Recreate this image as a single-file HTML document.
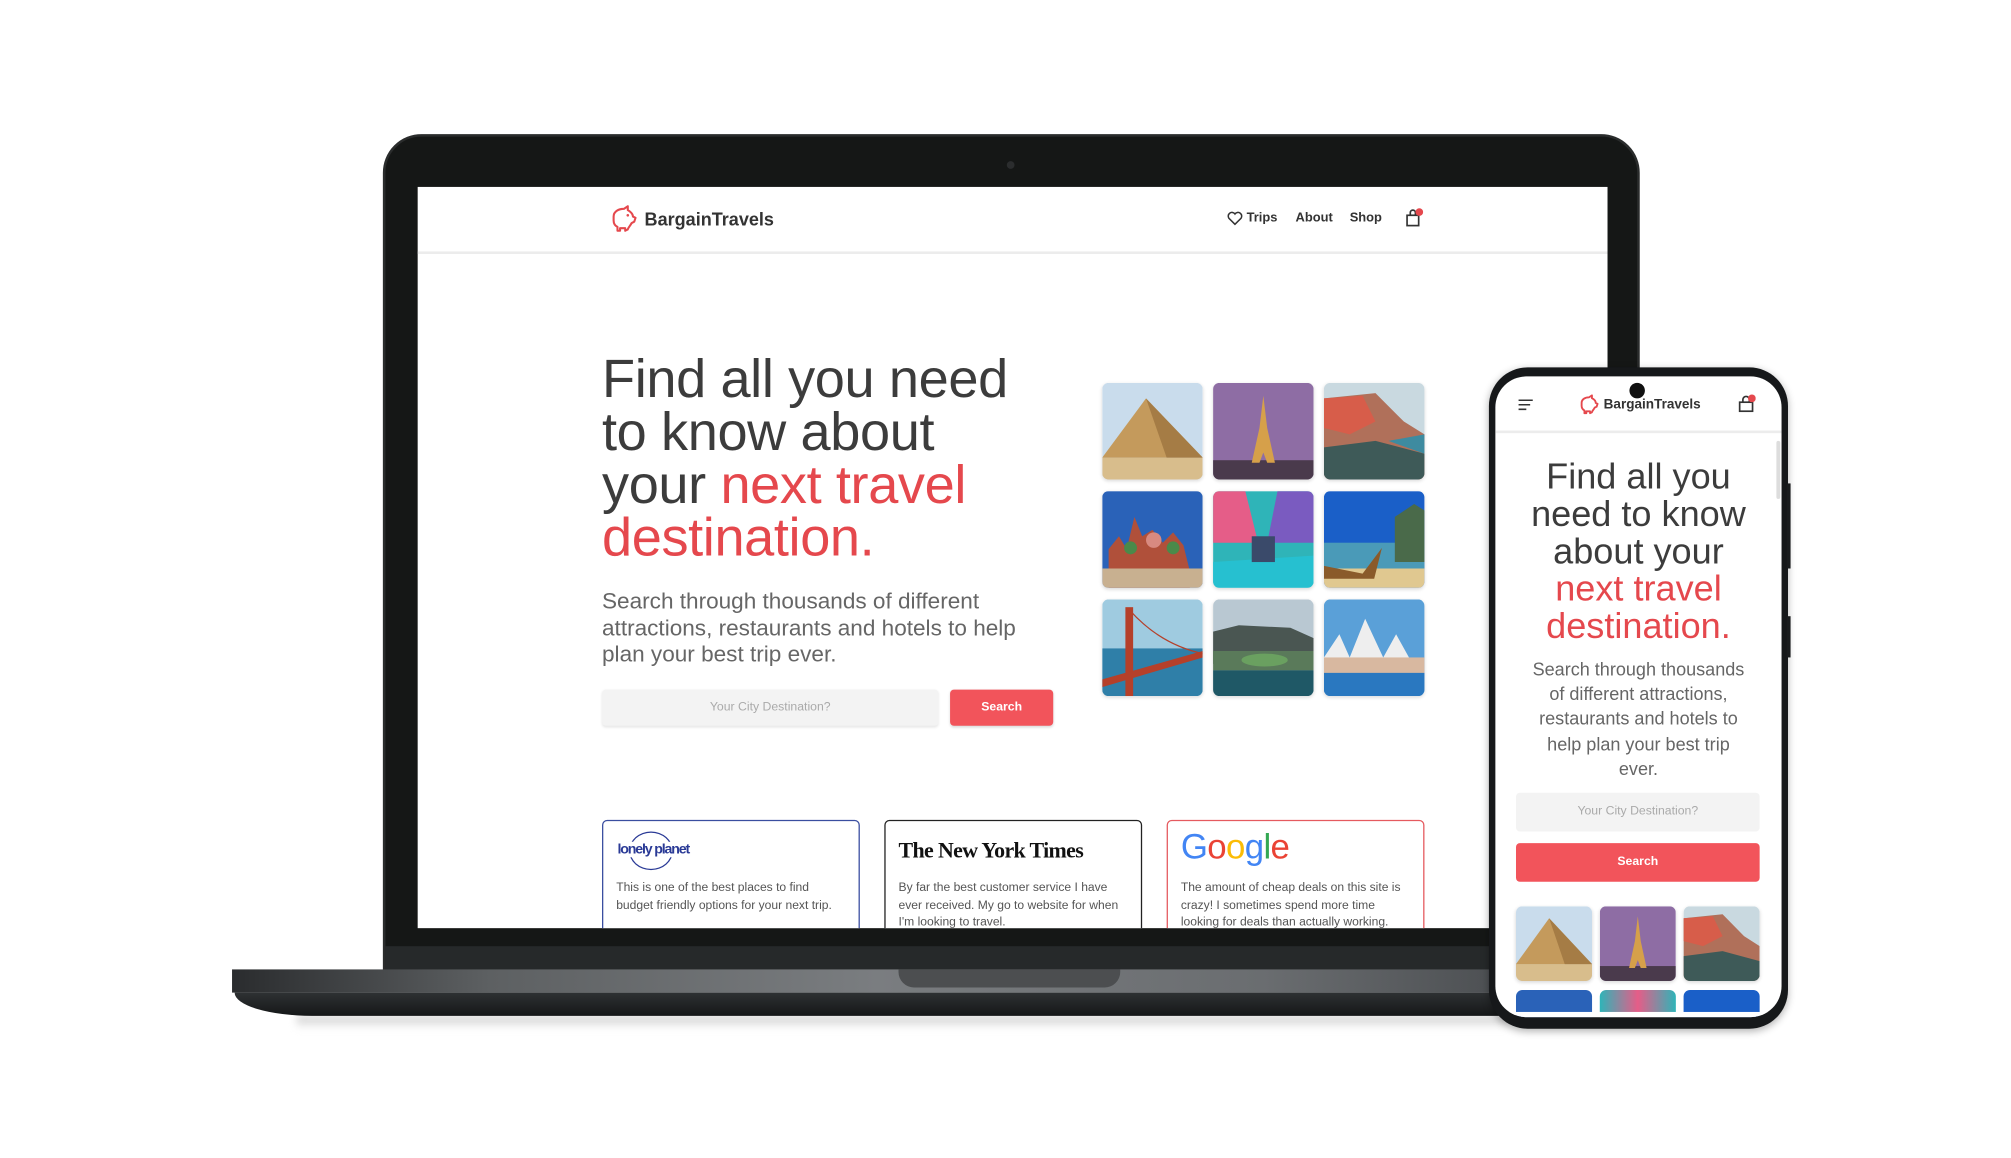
<!DOCTYPE html>
<html><head><meta charset="utf-8">
<style>
*{margin:0;padding:0;box-sizing:border-box}
html,body{width:2011px;height:1158px;background:#fff;overflow:hidden;font-family:"Liberation Sans",sans-serif}
#w{position:absolute;left:0;top:0;width:1560px;height:898px;transform:scale(1.28911);transform-origin:0 0}
.a{position:absolute}
.lid{left:297px;top:104px;width:975px;height:650px;background:#151716;border-radius:30px 30px 0 0;border:2px solid #2a2c2c}
.lidlow{left:299px;top:734px;width:971px;height:20px;background:#26292a}
.screen{left:324px;top:145px;width:923px;height:575px;background:#fff;overflow:hidden}
.baseT{left:180px;top:752px;width:1000px;height:18px;background:linear-gradient(90deg,#2a2c2e,#5d6062 20%,#7a7d80 50%,#6a6d70 80%,#4a4d50)}
.baseB{left:182px;top:770px;width:998px;height:18px;background:linear-gradient(#2e3133,#151718);border-radius:0 0 0 60px/0 0 0 18px}
.shadow{left:230px;top:788px;width:940px;height:10px;background:linear-gradient(#c8c8c8,rgba(255,255,255,0));filter:blur(3px)}
.notch{left:697px;top:752px;width:172px;height:14px;background:#4c4e50;border-radius:0 0 12px 12px}
.red{color:#e5484d}
.nav{font-size:10px;font-weight:bold;color:#333}
.ph{border-radius:5px;overflow:hidden;box-shadow:0 1px 3px rgba(0,0,0,.15)}
.ph svg{width:100%;height:100%;display:block}
.card{border:1.5px solid;border-radius:4px;background:#fff;width:200px;height:100px;padding:8px 10px}
.card p{font-size:9.4px;line-height:13.6px;color:#555;margin-top:22px}
.phone{left:1155px;top:285px;width:232px;height:513px;background:#16181a;border-radius:30px;box-shadow:0 2px 6px rgba(0,0,0,.3)}
.pscreen{left:1160px;top:292px;width:222px;height:497px;background:#fff;border-radius:24px;overflow:hidden}
</style></head><body><div id="w">

<div class="a lid"></div>
<div class="a" style="left:781px;top:125px;width:6px;height:6px;border-radius:50%;background:#2b2d2e"></div>
<div class="a lidlow"></div>
<div class="a shadow"></div>
<div class="a baseT"></div>
<div class="a baseB"></div>
<div class="a notch"></div>

<div class="a screen">
 <div class="a" style="left:0;top:50px;width:923px;height:2px;background:#ececec"></div>
 <svg class="a" style="left:148px;top:14px" width="22" height="22" viewBox="0 0 22 22"><path d="M4 9c0-4 4-6 8-6l3-2 0 3c2 1 4 3 4 5l2 1-1 3-2 1c-1 2-3 4-3 5l-2 1 0-2-4 0 0 2-2 0 0-3c-2-1-3-3-3-5z" fill="none" stroke="#e5484d" stroke-width="1.6" stroke-linejoin="round"/><circle cx="15" cy="8" r="1" fill="#e5484d"/></svg>
 <div class="a" style="left:176px;top:17px;font-size:14px;font-weight:bold;color:#333">BargainTravels</div>
 <svg class="a" style="left:628px;top:19px" width="12" height="11" viewBox="0 0 12 11"><path d="M6 10L1.3 5.3A2.7 2.7 0 0 1 6 2a2.7 2.7 0 0 1 4.7 3.3z" fill="none" stroke="#333" stroke-width="1.2"/></svg>
 <div class="a nav" style="left:643px;top:19px">Trips</div>
 <div class="a nav" style="left:681px;top:19px">About</div>
 <div class="a nav" style="left:723px;top:19px">Shop</div>
 <svg class="a" style="left:766px;top:16px" width="14" height="16" viewBox="0 0 14 16"><rect x="1.5" y="6" width="9" height="8" fill="none" stroke="#333" stroke-width="1.3"/><path d="M4 6V4a2 2 0 0 1 4 0v2" fill="none" stroke="#333" stroke-width="1.3"/><circle cx="11" cy="3.5" r="3" fill="#e5484d"/></svg>

 <div class="a" style="left:143px;top:128px;font-size:42px;line-height:41px;color:#3c3c3c;letter-spacing:-0.3px;width:400px">Find all you need<br>to know about<br>your <span class="red">next travel</span><br><span class="red">destination.</span></div>
 <div class="a" style="left:143px;top:311px;font-size:17.5px;line-height:20.5px;color:#666;width:350px">Search through thousands of different attractions, restaurants and hotels to help plan your best trip ever.</div>
 <div class="a" style="left:143px;top:390px;width:261px;height:28px;background:#f3f3f3;border-radius:3px;box-shadow:0 1px 2px rgba(0,0,0,.1);font-size:9.5px;color:#aaa;text-align:center;line-height:28px">Your City Destination?</div>
 <div class="a" style="left:413px;top:390px;width:80px;height:28px;background:#f2545b;border-radius:3px;box-shadow:0 1px 2px rgba(0,0,0,.15);font-size:9.5px;font-weight:bold;color:#fff;text-align:center;line-height:28px">Search</div>

 <div class="a" style="left:531px;top:152px;width:250px;height:243px">
  <div class="a ph" style="left:0;top:0;width:78px;height:75px"><svg viewBox="0 0 78 75" preserveAspectRatio="none"><rect width="78" height="75" fill="#c9dcec"/><rect y="58" width="78" height="17" fill="#d8bd8c"/><path d="M0 58L34 12 78 58z" fill="#c49a5c"/><path d="M34 12L78 58 50 58z" fill="#a57c45"/></svg></div>
  <div class="a ph" style="left:86px;top:0;width:78px;height:75px"><svg viewBox="0 0 78 75" preserveAspectRatio="none"><rect width="78" height="75" fill="#8e6da4"/><rect y="60" width="78" height="15" fill="#4a3a4c"/><path d="M39 10L36 35 30 62h6l3-8 3 8h6L42 35z" fill="#d6a04a"/></svg></div>
  <div class="a ph" style="left:172px;top:0;width:78px;height:75px"><svg viewBox="0 0 78 75" preserveAspectRatio="none"><rect width="78" height="75" fill="#c9d9e0"/><path d="M0 12L40 8 62 30 78 40V75H0z" fill="#b0705a"/><path d="M0 12L30 10 40 30 20 40 0 35z" fill="#d75d4a"/><path d="M0 50L40 45 78 55V75H0z" fill="#3e5a58"/><path d="M50 45l28-5v15z" fill="#3e8ba0"/></svg></div>
  <div class="a ph" style="left:0;top:84px;width:78px;height:75px"><svg viewBox="0 0 78 75" preserveAspectRatio="none"><rect width="78" height="75" fill="#2a62b8"/><path d="M5 75V45l8-10 6 10 6-25 6 15 8-5 8 10 8-8 8 10 5 20v13z" fill="#b0503a"/><rect y="60" width="78" height="15" fill="#c8b090"/><circle cx="40" cy="38" r="6" fill="#d88a80"/><circle cx="22" cy="44" r="5" fill="#4a8a4a"/><circle cx="55" cy="44" r="5" fill="#4a8a4a"/></svg></div>
  <div class="a ph" style="left:86px;top:84px;width:78px;height:75px"><svg viewBox="0 0 78 75" preserveAspectRatio="none"><rect width="78" height="75" fill="#2fb4b8"/><path d="M0 0h25L35 40H0z" fill="#e55d88"/><path d="M78 0H50L42 40h36z" fill="#7a5bc0"/><path d="M0 55L78 50v25H0z" fill="#26c0d0"/><rect x="30" y="35" width="18" height="20" fill="#3a4a6a"/></svg></div>
  <div class="a ph" style="left:172px;top:84px;width:78px;height:75px"><svg viewBox="0 0 78 75" preserveAspectRatio="none"><rect width="78" height="75" fill="#1a5fc8"/><rect y="40" width="78" height="20" fill="#4a9ab8"/><path d="M55 20l15-10 8 5v40H55z" fill="#4a6a4a"/><rect y="60" width="78" height="15" fill="#e0c890"/><path d="M0 58l30 6 15-20-6 24H0z" fill="#8a5a2a"/></svg></div>
  <div class="a ph" style="left:0;top:168px;width:78px;height:75px"><svg viewBox="0 0 78 75" preserveAspectRatio="none"><rect width="78" height="75" fill="#9fcbe0"/><rect y="38" width="78" height="37" fill="#2f7fa8"/><rect x="18" y="6" width="6" height="69" fill="#b5402a"/><path d="M0 62L78 40v5L0 68z" fill="#b5402a"/><path d="M21 8Q45 35 78 42" stroke="#b5402a" fill="none"/></svg></div>
  <div class="a ph" style="left:86px;top:168px;width:78px;height:75px"><svg viewBox="0 0 78 75" preserveAspectRatio="none"><rect width="78" height="75" fill="#b9c8d2"/><path d="M0 25l20-5 40 2 18 8v20H0z" fill="#4a5652"/><path d="M0 40l78 0v15H0z" fill="#5a7a5a"/><ellipse cx="40" cy="47" rx="18" ry="5" fill="#6aa060"/><rect y="55" width="78" height="20" fill="#1f5866"/></svg></div>
  <div class="a ph" style="left:172px;top:168px;width:78px;height:75px"><svg viewBox="0 0 78 75" preserveAspectRatio="none"><rect width="78" height="75" fill="#5aa0d8"/><path d="M0 45l12-18 8 18 12-30 14 30 10-18 10 18z" fill="#eee"/><rect y="45" width="78" height="12" fill="#d8b8a0"/><rect y="57" width="78" height="18" fill="#2a78c0"/></svg></div>
 </div>

 <div class="a card" style="left:143px;top:491px;border-color:#3a4ea0">
  <div style="position:absolute;left:20px;top:8px;width:34px;height:30px;border:1.5px solid #2a3a96;border-radius:50%"></div>
  <div style="font-size:11px;font-weight:bold;color:#2a3a96;letter-spacing:-0.9px;position:absolute;left:10px;top:16px;background:#fff;white-space:nowrap;padding:0 1px">lonely planet</div>
  <p style="margin-top:36px">This is one of the best places to find budget friendly options for your next trip.</p>
 </div>
 <div class="a card" style="left:362px;top:491px;border-color:#222">
  <div style="font-family:'Liberation Serif',serif;font-size:17px;font-weight:bold;color:#111;position:absolute;left:10px;top:13px;letter-spacing:-0.5px">The New York Times</div>
  <p style="margin-top:36px">By far the best customer service I have ever received. My go to website for when I'm looking to travel.</p>
 </div>
 <div class="a card" style="left:581px;top:491px;border-color:#e55a5f">
  <div style="font-size:27px;position:absolute;left:10px;top:5px;letter-spacing:-0.5px"><span style="color:#4285f4">G</span><span style="color:#ea4335">o</span><span style="color:#fbbc05">o</span><span style="color:#4285f4">g</span><span style="color:#34a853">l</span><span style="color:#ea4335">e</span></div>
  <p style="margin-top:36px">The amount of cheap deals on this site is crazy! I sometimes spend more time looking for deals than actually working.</p>
 </div>
</div>

<div class="a phone"></div>
<div class="a" style="left:1386px;top:375px;width:3px;height:66px;background:#1a1c1e"></div>
<div class="a" style="left:1386px;top:478px;width:3px;height:32px;background:#1a1c1e"></div>
<div class="a pscreen">
 <div class="a" style="left:0;top:42px;width:222px;height:2px;background:#ececec"></div>
 <div class="a" style="left:218px;top:50px;width:3px;height:45px;background:#ddd;border-radius:2px"></div>
 <svg class="a" style="left:17px;top:17px" width="13" height="10" viewBox="0 0 13 10"><path d="M1 1.5h11M1 5h9M1 8.5h6" stroke="#333" stroke-width="1.2"/></svg>
 <svg class="a" style="left:64px;top:14px" width="16" height="16" viewBox="0 0 22 22"><path d="M4 9c0-4 4-6 8-6l3-2 0 3c2 1 4 3 4 5l2 1-1 3-2 1c-1 2-3 4-3 5l-2 1 0-2-4 0 0 2-2 0 0-3c-2-1-3-3-3-5z" fill="none" stroke="#e5484d" stroke-width="2" stroke-linejoin="round"/></svg>
 <div class="a" style="left:84px;top:16px;font-size:10.5px;font-weight:bold;color:#333">BargainTravels</div>
 <svg class="a" style="left:188px;top:13px" width="14" height="16" viewBox="0 0 14 16"><rect x="1.5" y="7" width="10" height="7" fill="none" stroke="#333" stroke-width="1.3"/><path d="M4 7V5a2.5 2.5 0 0 1 5 0v2" fill="none" stroke="#333" stroke-width="1.3"/><circle cx="11" cy="4" r="3" fill="#e5484d"/></svg>
 <div class="a" style="left:104px;top:5px;width:12px;height:12px;border-radius:50%;background:#111"></div>
 <div class="a" style="left:0;top:63px;width:222px;text-align:center;font-size:28px;line-height:29px;color:#3c3c3c">Find all you<br>need to know<br>about your<br><span class="red">next travel</span><br><span class="red">destination.</span></div>
 <div class="a" style="left:0;top:218px;width:222px;text-align:center;font-size:14px;line-height:19.2px;color:#666">Search through thousands<br>of different attractions,<br>restaurants and hotels to<br>help plan your best trip<br>ever.</div>
 <div class="a" style="left:16px;top:323px;width:189px;height:30px;background:#f3f3f3;border-radius:3px;font-size:9.5px;color:#aaa;text-align:center;line-height:30px">Your City Destination?</div>
 <div class="a" style="left:16px;top:362px;width:189px;height:30px;background:#f2545b;border-radius:3px;font-size:9.5px;font-weight:bold;color:#fff;text-align:center;line-height:30px">Search</div>
 <div class="a ph" style="left:16px;top:411px;width:59px;height:58px"><svg viewBox="0 0 78 75" preserveAspectRatio="none"><rect width="78" height="75" fill="#c9dcec"/><rect y="58" width="78" height="17" fill="#d8bd8c"/><path d="M0 58L34 12 78 58z" fill="#c49a5c"/><path d="M34 12L78 58 50 58z" fill="#a57c45"/></svg></div>
 <div class="a ph" style="left:81px;top:411px;width:59px;height:58px"><svg viewBox="0 0 78 75" preserveAspectRatio="none"><rect width="78" height="75" fill="#8e6da4"/><rect y="60" width="78" height="15" fill="#4a3a4c"/><path d="M39 10L36 35 30 62h6l3-8 3 8h6L42 35z" fill="#d6a04a"/></svg></div>
 <div class="a ph" style="left:146px;top:411px;width:59px;height:58px"><svg viewBox="0 0 78 75" preserveAspectRatio="none"><rect width="78" height="75" fill="#c9d9e0"/><path d="M0 12L40 8 62 30 78 40V75H0z" fill="#b0705a"/><path d="M0 12L30 10 40 30 20 40 0 35z" fill="#d75d4a"/><path d="M0 50L40 45 78 55V75H0z" fill="#3e5a58"/></svg></div>
 <div class="a" style="left:16px;top:476px;width:59px;height:30px;background:#2a62b8;border-radius:5px"></div>
 <div class="a" style="left:81px;top:476px;width:59px;height:30px;background:linear-gradient(90deg,#2fb4b8,#e55d88,#2fb4b8);border-radius:5px"></div>
 <div class="a" style="left:146px;top:476px;width:59px;height:30px;background:#1a5fc8;border-radius:5px"></div>
 <div class="a" style="left:0;top:493px;width:222px;height:10px;background:#fff"></div>
</div>
</div></body></html>
